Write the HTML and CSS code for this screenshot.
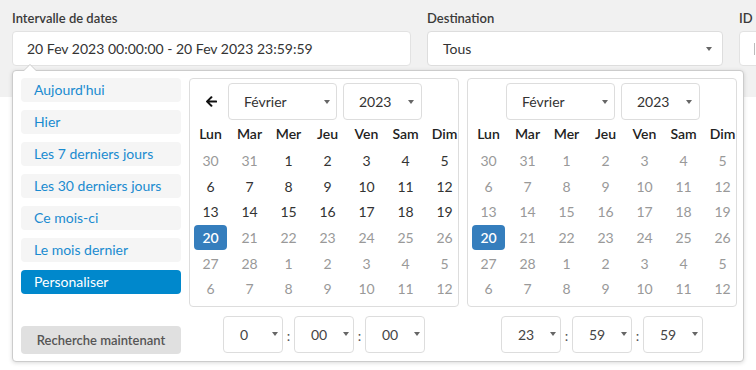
FILE: index.html
```html
<!DOCTYPE html>
<html lang="fr">
<head>
    <meta charset="UTF-8">
    <meta name="viewport" content="width=device-width, initial-scale=1.0">
    <title>Recherche</title>
    <link rel="stylesheet" href="styles.css">
</head>
<body>

    <!-- barre de filtres -->
    <div class="filters">
        <div class="field field-range">
            <label class="field-label">Intervalle de dates</label>
            <div class="input">20 Fev 2023 00:00:00 - 20 Fev 2023 23:59:59</div>
        </div>
        <div class="field field-dest">
            <label class="field-label">Destination</label>
            <div class="input sel">Tous<span class="caret"></span></div>
        </div>
        <div class="field field-id">
            <label class="field-label">ID</label>
            <div class="input placeholder"></div>
        </div>
    </div>

    <!-- résultats -->
    <div class="results">
        <div class="row row-head"></div>
        <div class="row"></div>
    </div>

    <!-- sélecteur de dates -->
    <div class="picker">
        <div class="ranges">
            <ul>
                <li>Aujourd'hui</li>
                <li>Hier</li>
                <li>Les 7 derniers jours</li>
                <li>Les 30 derniers jours</li>
                <li>Ce mois-ci</li>
                <li>Le mois dernier</li>
                <li class="active">Personaliser</li>
            </ul>
            <button class="btn-search">Recherche maintenant</button>
        </div>

        <div class="cal-wrap">
            <div class="cal">
                <div class="cal-head">
                    <span class="prev">
                        <svg width="11" height="11" viewBox="0 0 448 448"><path d="M257.5 413.1l-22.2 22.2c-9.4 9.4-24.6 9.4-33.9 0L7 241c-9.4-9.4-9.4-24.6 0-33.9L201.4 12.7c9.4-9.4 24.6-9.4 33.9 0l22.2 22.2c9.5 9.5 9.3 25-.4 34.3L136.6 184H424c13.3 0 24 10.7 24 24v32c0 13.3-10.7 24-24 24H136.6l120.5 114.8c9.8 9.3 10 24.8.4 34.3z" fill="#111"/></svg>
                    </span>
                    <div class="sel sel-month">Février<span class="caret"></span></div>
                    <div class="sel sel-year">2023<span class="caret"></span></div>
                </div>
                <div class="days">
                    <span class="dow">Lun</span><span class="dow">Mar</span><span class="dow">Mer</span><span class="dow">Jeu</span><span class="dow">Ven</span><span class="dow">Sam</span><span class="dow">Dim</span>
                    <span class="off">30</span><span class="off">31</span><span>1</span><span>2</span><span>3</span><span>4</span><span>5</span>
                    <span>6</span><span>7</span><span>8</span><span>9</span><span>10</span><span>11</span><span>12</span>
                    <span>13</span><span>14</span><span>15</span><span>16</span><span>17</span><span>18</span><span>19</span>
                    <span class="active">20</span><span class="off">21</span><span class="off">22</span><span class="off">23</span><span class="off">24</span><span class="off">25</span><span class="off">26</span>
                    <span class="off">27</span><span class="off">28</span><span class="off">1</span><span class="off">2</span><span class="off">3</span><span class="off">4</span><span class="off">5</span>
                    <span class="off">6</span><span class="off">7</span><span class="off">8</span><span class="off">9</span><span class="off">10</span><span class="off">11</span><span class="off">12</span>
                </div>
            </div>
            <div class="time">
                <div class="sel sel-time">0<span class="caret"></span></div>
                <span class="colon">:</span>
                <div class="sel sel-time">00<span class="caret"></span></div>
                <span class="colon">:</span>
                <div class="sel sel-time">00<span class="caret"></span></div>
            </div>
        </div>

        <div class="cal-wrap">
            <div class="cal">
                <div class="cal-head">
                    <span class="prev"></span>
                    <div class="sel sel-month">Février<span class="caret"></span></div>
                    <div class="sel sel-year">2023<span class="caret"></span></div>
                </div>
                <div class="days">
                    <span class="dow">Lun</span><span class="dow">Mar</span><span class="dow">Mer</span><span class="dow">Jeu</span><span class="dow">Ven</span><span class="dow">Sam</span><span class="dow">Dim</span>
                    <span class="off">30</span><span class="off">31</span><span class="off">1</span><span class="off">2</span><span class="off">3</span><span class="off">4</span><span class="off">5</span>
                    <span class="off">6</span><span class="off">7</span><span class="off">8</span><span class="off">9</span><span class="off">10</span><span class="off">11</span><span class="off">12</span>
                    <span class="off">13</span><span class="off">14</span><span class="off">15</span><span class="off">16</span><span class="off">17</span><span class="off">18</span><span class="off">19</span>
                    <span class="active">20</span><span class="off">21</span><span class="off">22</span><span class="off">23</span><span class="off">24</span><span class="off">25</span><span class="off">26</span>
                    <span class="off">27</span><span class="off">28</span><span class="off">1</span><span class="off">2</span><span class="off">3</span><span class="off">4</span><span class="off">5</span>
                    <span class="off">6</span><span class="off">7</span><span class="off">8</span><span class="off">9</span><span class="off">10</span><span class="off">11</span><span class="off">12</span>
                </div>
            </div>
            <div class="time">
                <div class="sel sel-time">23<span class="caret"></span></div>
                <span class="colon">:</span>
                <div class="sel sel-time">59<span class="caret"></span></div>
                <span class="colon">:</span>
                <div class="sel sel-time">59<span class="caret"></span></div>
            </div>
        </div>
    </div>

</body>
</html>
```

FILE: styles.css
```css
html, body { overflow: hidden; }
body { margin: 0; background: #fff; font-family: Lato, "Liberation Sans", sans-serif; color: #333; font-size: 14px; }

/* filtres */
.filters { display: flex; gap: 16px; padding: 10px 0 31px 12px; background: #f1f1f1; overflow: hidden; }
.field { flex: none; }
.field-range { width: 399px; }
.field-dest { width: 296px; }
.field-id { width: 200px; }
.field-label { display: block; font-size: 13px; font-weight: 600; line-height: 16px; margin-bottom: 5px; color: #3a3a3a; }
.input { box-sizing: border-box; height: 35px; line-height: 33px; padding: 0 14px; background: #fff; border: 1px solid #e2e2e2; border-radius: 4px; font-size: 14px; color: #333; }
.input.placeholder { position: relative; }
.input.placeholder::before { content: ""; position: absolute; top: 11px; left: 14px; width: 1px; height: 12px; background: #bbb; }

/* résultats */
.results { padding: 0 12px; }
.row { height: 30px; border-bottom: 1px solid #e3e3e3; }
.row-head { height: 64px; }

/* sélects */
.sel { box-sizing: border-box; display: flex; align-items: center; height: 37px; padding: 0 6px 0 15px; border: 1px solid #ddd; border-radius: 4px; background: #fff; font-size: 14px; color: #333; }
.input.sel { height: 35px; padding-right: 10px; }
.caret { margin-left: auto; width: 0; height: 0; border-left: 3.5px solid transparent; border-right: 3.5px solid transparent; border-top: 4px solid #666; }

/* popup */
.picker { position: absolute; top: 70px; left: 12px; display: flex; gap: 8px; padding: 7px 6px 8px 8px; background: #fff; border: 1px solid #ccc; border-radius: 4px; box-shadow: 0 1px 4px rgba(0, 0, 0, 0.15); }
.picker::before { content: ""; position: absolute; top: -7px; left: 10px; border-left: 7px solid transparent; border-right: 7px solid transparent; border-bottom: 7px solid #ccc; }
.picker::after { content: ""; position: absolute; top: -6px; left: 11px; border-left: 6px solid transparent; border-right: 6px solid transparent; border-bottom: 6px solid #fff; }

.ranges { width: 160px; display: flex; flex-direction: column; justify-content: space-between; }
.ranges ul { list-style: none; margin: 0; padding: 0; display: flex; flex-direction: column; gap: 8px; }
.ranges li { height: 24px; line-height: 24px; padding: 0 13px; background: #f5f5f5; border-radius: 4px; color: #1a8bd0; }
.ranges li.active { background: #0088cc; color: #fff; }
.btn-search { height: 28px; margin-bottom: -1px; border: 0; border-radius: 4px; background: #e0e0e0; color: #555; font-family: inherit; font-size: 13px; font-weight: 600; }

/* calendriers */
.cal { box-sizing: border-box; width: 270px; padding: 4px; border: 1px solid #ddd; border-radius: 4px; }
.cal-head { display: flex; align-items: center; }
.prev { width: 34px; display: flex; justify-content: center; }
.sel-month { width: 109px; margin-right: 6px; }
.sel-year { width: 79px; padding-right: 7px; }
.days { display: grid; grid-template-columns: repeat(7, 33px); grid-template-rows: 28px repeat(6, 25.6px); column-gap: 6px; }
.days span { display: flex; align-items: center; justify-content: center; border-radius: 4px; color: #333; }
.days .dow { font-weight: 600; color: #222; padding-bottom: 1px; }
.days .off { color: #999; }
.days .active { background: #357ebd; color: #fff; font-weight: 600; }

.time { display: flex; justify-content: center; align-items: center; margin-top: 9px; }
.sel-time { width: 60px; padding: 0 4px 0 16px; color: #444; }
.colon { width: 11px; text-align: center; color: #555; padding-top: 3px; }
```
